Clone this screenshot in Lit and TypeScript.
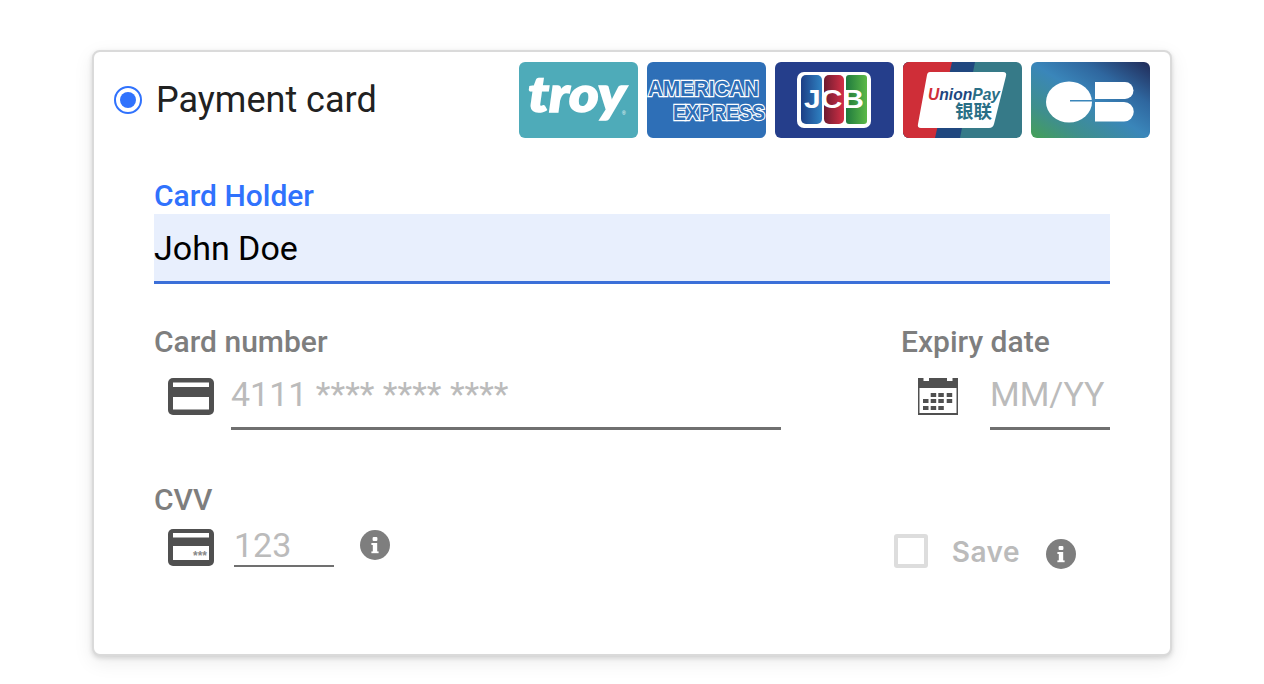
import { LitElement, html, css, svg } from "lit";
import { customElement } from "lit/decorators.js";

const cardIcon = svg`<svg class="ci" width="46" height="37" viewBox="0 0 46 37"><rect width="46" height="37" rx="5" fill="#505050"/><rect x="5" y="4.5" width="36" height="4.5" fill="#fff"/><rect x="5" y="19" width="36" height="12.5" fill="#fff"/></svg>`;
const cvvIcon = svg`<svg class="ci cv" width="46" height="37" viewBox="0 0 46 37"><rect width="46" height="37" rx="5" fill="#505050"/><rect x="5" y="4" width="36" height="4.5" fill="#fff"/><rect x="5" y="17" width="36" height="14" fill="#fff"/><text x="39" y="31" text-anchor="end" font-family="'Liberation Sans',sans-serif" font-size="12" font-weight="700" fill="#888">***</text></svg>`;
const calDots: [number, number][] = [[12.7,15],[20.3,15],[28.7,15],[5,21],[12.7,21],[20.3,21],[28.7,21],[5,28],[12.7,28],[20.3,28]];
const calIcon = svg`<svg class="cal" width="40" height="37" viewBox="0 0 40 37"><rect width="40" height="37" fill="#505050"/><rect x="1.500" y="10" width="37" height="25" fill="#fff"/><rect x="5.500" y="0" width="5.500" height="3" fill="#fff"/><rect x="29" y="0" width="5.500" height="3" fill="#fff"/>${calDots.map(([x, y]) => svg`<rect x="${x}" y="${y}" width="5.500" height="4" fill="#505050"/>`)}</svg>`;
const info = svg`<svg width="30" height="30" viewBox="0 0 30 30"><circle cx="15" cy="15" r="15" fill="#7e7e7e"/><rect x="12.600" y="7" width="4.800" height="4" rx="1" fill="#fff"/><rect x="12.800" y="13" width="4.400" height="10" fill="#fff"/><rect x="11.400" y="13" width="3" height="2" fill="#fff"/><rect x="11.400" y="21.400" width="7.200" height="1.800" fill="#fff"/></svg>`;

const troy = svg`<svg class="logo" viewBox="0 0 119 76"><rect width="119" height="76" rx="6" fill="#4eabb9"/><text x="9" y="50" font-family="Lato,sans-serif" font-weight="900" font-style="italic" font-size="50" textLength="98" lengthAdjust="spacingAndGlyphs" fill="#fff" stroke="#fff" stroke-width="1.600">troy</text><text x="103" y="53" font-family="'Liberation Sans',sans-serif" font-size="5" fill="#fff">®</text></svg>`;
const amex = svg`<svg class="logo" viewBox="0 0 119 76"><rect width="119" height="76" rx="6" fill="#2e6fb7"/><g font-family="'Liberation Sans',sans-serif" font-weight="700" fill="#2e6fb7" stroke="#fff" stroke-width="2.400" paint-order="stroke" stroke-linejoin="miter"><text x="1" y="34" font-size="22.500" textLength="111" lengthAdjust="spacingAndGlyphs">AMERICAN</text><text x="26" y="58" font-size="22.500" textLength="92" lengthAdjust="spacingAndGlyphs">EXPRESS</text></g></svg>`;
const jcb = svg`<svg class="logo" viewBox="0 0 119 76"><defs><linearGradient id="jb" x1="0" x2="1"><stop offset="0" stop-color="#1d3f86"/><stop offset="1" stop-color="#2f82c2"/></linearGradient><linearGradient id="jr" x1="0" x2="1"><stop offset="0" stop-color="#6e1c30"/><stop offset="1" stop-color="#d42f46"/></linearGradient><linearGradient id="jg" x1="0" x2="1"><stop offset="0" stop-color="#1f7a3e"/><stop offset="1" stop-color="#5cb947"/></linearGradient></defs><rect width="119" height="76" rx="6" fill="#253e8b"/><rect x="22" y="10" width="74" height="56" rx="7" fill="#fff"/><rect x="26" y="13" width="21" height="49" rx="5" fill="url(#jb)"/><rect x="49" y="13" width="20" height="49" rx="5" fill="url(#jr)"/><rect x="71" y="13" width="21" height="49" rx="3" fill="url(#jg)"/><text x="29" y="46" font-family="'Liberation Sans',sans-serif" font-weight="700" font-size="25" textLength="60" lengthAdjust="spacingAndGlyphs" fill="#fff">JCB</text></svg>`;
const union = svg`<svg class="logo" viewBox="0 0 119 76"><defs><clipPath id="uc"><rect width="119" height="76" rx="6"/></clipPath></defs><g clip-path="url(#uc)"><rect width="119" height="76" fill="#367a88"/><polygon points="0,0 72,0 57,76 0,76" fill="#20477f"/><polygon points="0,0 49,0 32,76 0,76" fill="#cf2e38"/></g><path d="M27 10H100Q104 10 103 14L91 62Q90 66 86 66H18Q14 66 15 62L24 13Q24.500 10 27 10Z" fill="#fff"/><text x="25" y="38" font-family="'Liberation Sans',sans-serif" font-weight="700" font-style="italic" font-size="17" textLength="72" lengthAdjust="spacingAndGlyphs" fill="#2a6f86"><tspan fill="#cf2e38">U</tspan><tspan fill="#20477f">nion</tspan>Pay</text><text x="52" y="56" font-family="'Noto Sans CJK SC',sans-serif" font-weight="700" font-size="18.500" fill="#2a6f86">银联</text></svg>`;
const cb = svg`<svg class="logo" viewBox="0 0 119 76"><defs><linearGradient id="cbg" x1="0" y1="1" x2="1" y2="0"><stop offset="0" stop-color="#45a055"/><stop offset=".22" stop-color="#3f8f8c"/><stop offset=".5" stop-color="#3a86ba"/><stop offset=".72" stop-color="#2f679f"/><stop offset="1" stop-color="#212b58"/></linearGradient></defs><rect width="119" height="76" rx="6" fill="url(#cbg)"/><ellipse cx="38" cy="40" rx="23" ry="20.500" fill="#fff"/><rect x="39" y="38" width="25" height="1.500" fill="#3a86ba"/><path d="M64 20H94A8.500 8.500 0 0 1 94 37H64Z" fill="#fff"/><path d="M64 40H93A9.500 9.500 0 0 1 93 59.500H64Z" fill="#fff"/></svg>`;

@customElement("app-root")
export class AppRoot extends LitElement {
  static styles = css`
    :host { display: block; padding: 50px 0 0 92px; font-family: Roboto, sans-serif; background: #fff; height: 634px; }
    .card { box-sizing: border-box; width: 1080px; height: 606px; border: 2px solid #dadada; border-radius: 8px; box-shadow: 0 2px 5px rgba(0,0,0,.14), 0 6px 20px rgba(0,0,0,.08); background: #fff; padding: 10px 20px 0 20px; }
    .head { display: flex; align-items: center; justify-content: space-between; height: 76px; }
    .pay { display: flex; align-items: center; gap: 14px; font-size: 36px; color: #212121; }
    .radio { box-sizing: border-box; width: 28px; height: 28px; border: 2px solid #3072fd; border-radius: 50%; display: flex; align-items: center; justify-content: center; }
    .radio i { width: 16px; height: 16px; border-radius: 50%; background: #3072fd; }
    .logos { display: flex; gap: 9px; }
    .logo { width: 119px; height: 76px; display: block; }
    .form { padding: 39px 40px 0 40px; }
    .lbl { font-size: 30px; font-weight: 500; line-height: 38px; height: 38px; color: #7e7e7e; }
    .active { color: #3072fd; }
    .holder { box-sizing: border-box; height: 70px; background: #e8effd; border-bottom: 3px solid #3b6fd8; font-size: 34px; line-height: 68px; color: #000; margin-top: -1px; }
    .row { display: flex; justify-content: space-between; margin-top: 39px; }
    .num { width: 627px; }
    .exp { width: 209px; }
    .line { display: flex; align-items: flex-start; }
    .ci { margin: 17px 17px 0 14px; display: block; flex: none; }
    .cv { margin-top: 10px; margin-right: 17px; }
    .cal { margin: 17px 32px 0 17px; display: block; flex: none; }
    .field { box-sizing: border-box; height: 69px; border-bottom: 3px solid #707070; font-size: 34px; line-height: 66px; color: #bbb; white-space: nowrap; }
    .f-num { width: 550px; }
    .f-exp { width: 120px; }
    .row2 { display: flex; justify-content: space-between; margin-top: 51px; }
    .cvv-line { display: flex; align-items: flex-start; }
    .f-cvv { box-sizing: border-box; width: 100px; height: 48px; margin: 0 26px 0 3px; border-bottom: 2px solid #707070; font-size: 34px; line-height: 52px; color: #bbb; }
    .inf { margin-top: 11px; display: block; }
    .save { display: flex; align-items: flex-start; margin: 53px 34px 0 0; }
    .box { box-sizing: border-box; width: 34px; height: 34px; border: 4px solid #ddd; border-radius: 3px; margin-right: 24px; }
    .save span { font-family: Inter, sans-serif; font-weight: 600; font-size: 28px; line-height: 36px; letter-spacing: .5px; color: #bbb; margin-right: 26px; }
    .save svg { display: block; margin-top: 5px; }
  `;
  render() {
    return html`<div class="card">
      <div class="head">
        <div class="pay"><div class="radio"><i></i></div>Payment card</div>
        <div class="logos">${troy}${amex}${jcb}${union}${cb}</div>
      </div>
      <div class="form">
        <div class="lbl active">Card Holder</div>
        <div class="holder">John Doe</div>
        <div class="row">
          <div class="num">
            <div class="lbl">Card number</div>
            <div class="line">${cardIcon}<div class="field f-num">4111 **** **** ****</div></div>
          </div>
          <div class="exp">
            <div class="lbl">Expiry date</div>
            <div class="line">${calIcon}<div class="field f-exp">MM/YY</div></div>
          </div>
        </div>
        <div class="row2">
          <div>
            <div class="lbl">CVV</div>
            <div class="cvv-line">${cvvIcon}<div class="f-cvv">123</div><div class="inf">${info}</div></div>
          </div>
          <div class="save"><div class="box"></div><span>Save</span>${info}</div>
        </div>
      </div>
    </div>`;
  }
}
